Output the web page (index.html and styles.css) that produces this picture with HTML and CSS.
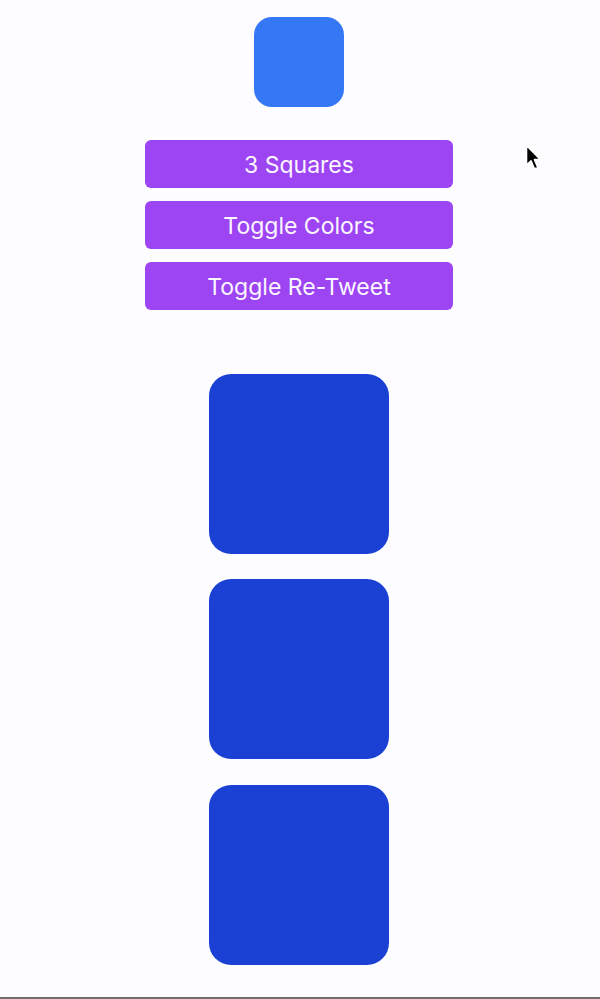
FILE: index.html
```html
<!DOCTYPE html>
<html>
<head>
<meta charset="utf-8">
<link rel="stylesheet" href="styles.css">
</head>
<body>
<div class="page">
  <div class="logo"></div>
  <div class="buttons">
    <button class="btn">3 Squares</button>
    <button class="btn">Toggle Colors</button>
    <button class="btn">Toggle Re-Tweet</button>
  </div>
  <div class="squares">
    <div class="square"></div>
    <div class="square"></div>
    <div class="square"></div>
  </div>
  <svg class="cursor" width="20" height="28" viewBox="0 0 20 28">
    <path d="M1.5 1.5 L1.5 21 L6 16.8 L9.4 24.8 L12.8 23.4 L9.5 15.6 L15.5 15.6 Z" fill="#000" stroke="#fff" stroke-width="1.6" stroke-linejoin="round"/>
  </svg>
</div>
</body>
</html>
```
FILE: styles.css
```css
html, body {
  margin: 0;
  padding: 0;
  background: #fdfcff;
}
.page {
  position: relative;
  height: 997px;
  padding-right: 2px;
  border-bottom: 2px solid #707070;
  display: flex;
  flex-direction: column;
  align-items: center;
  font-family: Inter, "Noto Sans", sans-serif;
}
.logo {
  margin-top: 17px;
  width: 90px;
  height: 90px;
  border-radius: 18px;
  background: #3478f6;
}
.buttons {
  margin-top: 33px;
  display: flex;
  flex-direction: column;
  gap: 13px;
}
.btn {
  width: 308px;
  height: 48px;
  border: none;
  border-radius: 6px;
  background: #9d45f3;
  color: #fbf6ff;
  font-family: Inter, "Noto Sans", sans-serif;
  font-size: 23px;
  font-weight: 400;
  padding: 2px 0 0;
}
.squares {
  margin-top: 64px;
  display: flex;
  flex-direction: column;
  gap: 25px;
}
.square {
  width: 180px;
  height: 180px;
  border-radius: 22px;
  background: #1a41d4;
}
.square:last-child {
  margin-top: 1px;
}
.cursor {
  position: absolute;
  left: 525px;
  top: 144px;
}
```
